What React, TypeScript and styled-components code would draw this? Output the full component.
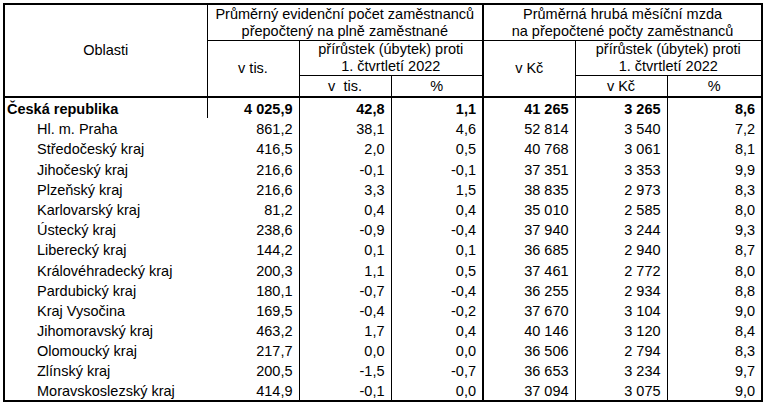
import React from 'react';
import styled, { createGlobalStyle } from 'styled-components';

const Global = createGlobalStyle`
  html, body { margin: 0; padding: 0; background: #fff; }
  body {
    font-family: "Liberation Sans", Arial, sans-serif;
    font-size: 14.5px;
    color: #000;
  }
`;

const Page = styled.div`
  padding: 3px 0 0 3px;
`;

const Table = styled.table`
  border-collapse: collapse;
  table-layout: fixed;
  width: 758px;
  border: 2px solid #000;
`;

const HeadCell = styled.th<{ $thickRight?: boolean; $thickBottom?: boolean; $h?: number }>`
  font-weight: normal;
  text-align: center;
  vertical-align: middle;
  line-height: 17px;
  padding: 0;
  border: 1px solid #000;
  ${(p) => (p.$thickRight ? 'border-right: 2px solid #000;' : '')}
  ${(p) => (p.$thickBottom ? 'border-bottom: 2px solid #000;' : '')}
  ${(p) => (p.$h ? `height: ${p.$h}px;` : '')}
  white-space: nowrap;
`;

const Row = styled.tr<{ $first?: boolean }>`
  height: ${(p) => (p.$first ? '21px' : '20.2px')};
`;

const NameCell = styled.td<{ $bold?: boolean; $lined?: boolean }>`
  padding: 0 0 0 ${(p) => (p.$bold ? '2px' : '32px')};
  font-weight: ${(p) => (p.$bold ? 'bold' : 'normal')};
  text-align: left;
  vertical-align: bottom;
  white-space: nowrap;
  line-height: 17px;
  border-right: ${(p) => (p.$lined ? '1px solid #000' : 'none')};
`;

const NumCell = styled.td<{ $bold?: boolean; $thickRight?: boolean }>`
  padding: 0 6px 0 0;
  font-weight: ${(p) => (p.$bold ? 'bold' : 'normal')};
  text-align: right;
  vertical-align: bottom;
  white-space: nowrap;
  line-height: 17px;
  border-right: ${(p) => (p.$thickRight ? '2px' : '1px')} solid #000;
`;

type R = [string, string, string, string, string, string, string];

const rows: R[] = [
  ['Česká republika', '4 025,9', '42,8', '1,1', '41 265', '3 265', '8,6'],
  ['Hl. m. Praha', '861,2', '38,1', '4,6', '52 814', '3 540', '7,2'],
  ['Středočeský kraj', '416,5', '2,0', '0,5', '40 768', '3 061', '8,1'],
  ['Jihočeský kraj', '216,6', '-0,1', '-0,1', '37 351', '3 353', '9,9'],
  ['Plzeňský kraj', '216,6', '3,3', '1,5', '38 835', '2 973', '8,3'],
  ['Karlovarský kraj', '81,2', '0,4', '0,4', '35 010', '2 585', '8,0'],
  ['Ústecký kraj', '238,6', '-0,9', '-0,4', '37 940', '3 244', '9,3'],
  ['Liberecký kraj', '144,2', '0,1', '0,1', '36 685', '2 940', '8,7'],
  ['Královéhradecký kraj', '200,3', '1,1', '0,5', '37 461', '2 772', '8,0'],
  ['Pardubický kraj', '180,1', '-0,7', '-0,4', '36 255', '2 934', '8,8'],
  ['Kraj Vysočina', '169,5', '-0,4', '-0,2', '37 670', '3 104', '9,0'],
  ['Jihomoravský kraj', '463,2', '1,7', '0,4', '40 146', '3 120', '8,4'],
  ['Olomoucký kraj', '217,7', '0,0', '0,0', '36 506', '2 794', '8,3'],
  ['Zlínský kraj', '200,5', '-1,5', '-0,7', '36 653', '3 234', '9,7'],
  ['Moravskoslezský kraj', '414,9', '-0,1', '0,0', '37 094', '3 075', '9,0'],
];

const widths = [203, 92, 92, 92, 92, 92, 95];

export default function App() {
  return (
    <>
      <Global />
      <Page>
        <Table>
          <colgroup>
            {widths.map((w, i) => (
              <col key={i} style={{ width: w }} />
            ))}
          </colgroup>
          <thead>
            <tr>
              <HeadCell rowSpan={3} $thickBottom>Oblasti</HeadCell>
              <HeadCell colSpan={3} $thickRight $h={35}>
                Průměrný evidenční počet zaměstnanců
                <br />
                přepočtený na plně zaměstnané
              </HeadCell>
              <HeadCell colSpan={3}>
                Průměrná hrubá měsíční mzda
                <br />
                na přepočtené počty zaměstnanců
              </HeadCell>
            </tr>
            <tr>
              <HeadCell rowSpan={2} $thickBottom>v tis.</HeadCell>
              <HeadCell colSpan={2} $thickRight $h={32}>
                přírůstek (úbytek) proti
                <br />
                1. čtvrtletí 2022
              </HeadCell>
              <HeadCell rowSpan={2} $thickBottom>v Kč</HeadCell>
              <HeadCell colSpan={2}>
                přírůstek (úbytek) proti
                <br />
                1. čtvrtletí 2022
              </HeadCell>
            </tr>
            <tr>
              <HeadCell $thickBottom $h={20}>v&nbsp;&nbsp;tis.</HeadCell>
              <HeadCell $thickBottom $thickRight>%</HeadCell>
              <HeadCell $thickBottom>v Kč</HeadCell>
              <HeadCell $thickBottom>%</HeadCell>
            </tr>
          </thead>
          <tbody>
            {rows.map((r, i) => {
              const bold = i === 0;
              return (
                <Row key={r[0]} $first={bold}>
                  <NameCell $bold={bold} $lined={bold}>{r[0]}</NameCell>
                  <NumCell $bold={bold}>{r[1]}</NumCell>
                  <NumCell $bold={bold}>{r[2]}</NumCell>
                  <NumCell $bold={bold} $thickRight>{r[3]}</NumCell>
                  <NumCell $bold={bold}>{r[4]}</NumCell>
                  <NumCell $bold={bold}>{r[5]}</NumCell>
                  <NumCell $bold={bold}>{r[6]}</NumCell>
                </Row>
              );
            })}
          </tbody>
        </Table>
      </Page>
    </>
  );
}
